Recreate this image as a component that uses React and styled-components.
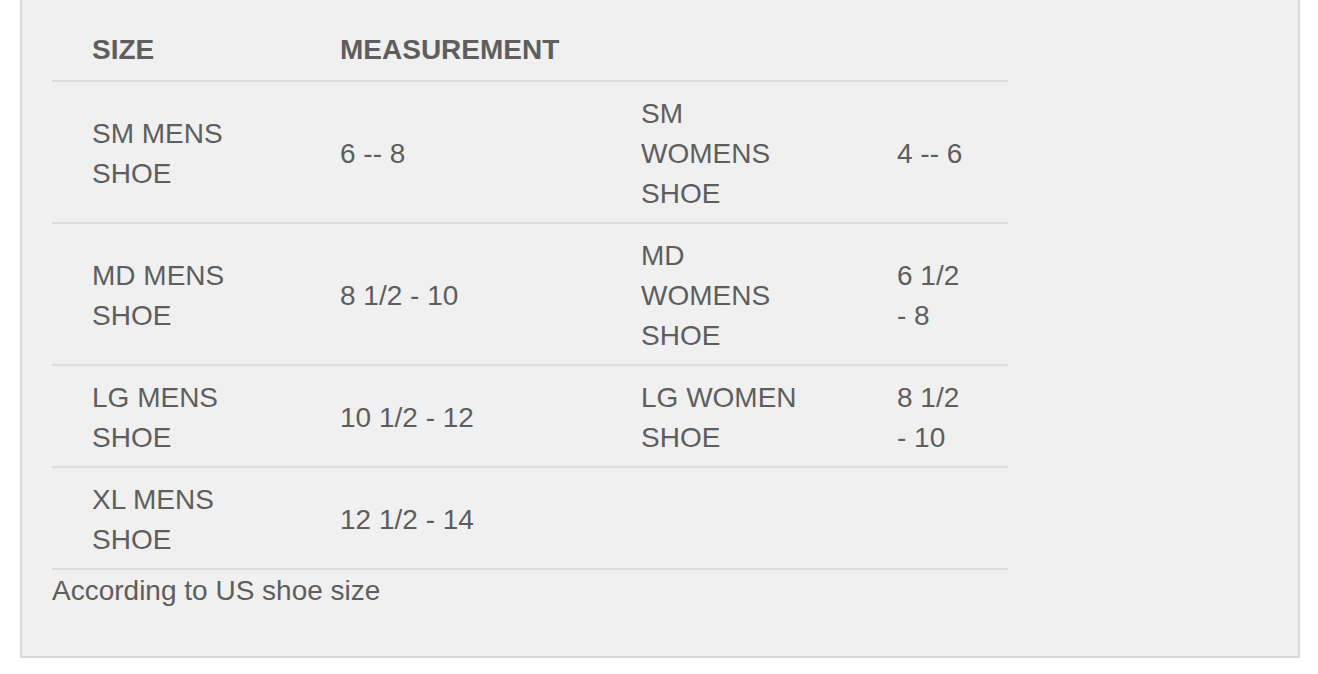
import React from 'react';
import styled, { createGlobalStyle } from 'styled-components'

const Global = createGlobalStyle `
    body {
        margin: 0;
        background: #fff;
        font-family: "Liberation Sans", Arial, Helvetica, sans-serif;
    }
`

const Panel = styled.div `
    margin: 0 18px 0 20px;
    padding: 20px 30px 45px;
    background: #f0f0f0;
    border: 2px solid #d9d9d9;
    border-top: none;
    color: #5e5e5e;
    font-size: 28px;
    line-height: 40px;
`

const Table = styled.table `
    width: 956px;
    border-collapse: collapse;
    table-layout: fixed;
`

const Col = styled.col `
    width: ${props => props.w}px;
`

const Head = styled.th `
    text-align: left;
    font-weight: 700;
    padding: 10px 16px;
    white-space: nowrap;
    &:first-child {
        padding-left: 40px;
    }
`

const Row = styled.tr `
    border-top: 2px solid #dddddd;
    &:last-child {
        border-bottom: 2px solid #dddddd;
    }
`

const Cell = styled.td `
    padding: 12px 16px 8px;
    vertical-align: middle;
    white-space: nowrap;
    &:first-child {
        padding-left: 40px;
    }
`

const Note = styled.p `
    margin: 1px 0 0;
`

const rows = [
    [['SM MENS', 'SHOE'], ['6 -- 8'], ['SM', 'WOMENS', 'SHOE'], ['4 -- 6']],
    [['MD MENS', 'SHOE'], ['8 1/2 - 10'], ['MD', 'WOMENS', 'SHOE'], ['6 1/2', '- 8']],
    [['LG MENS', 'SHOE'], ['10 1/2 - 12'], ['LG WOMEN', 'SHOE'], ['8 1/2', '- 10']],
    [['XL MENS', 'SHOE'], ['12 1/2 - 14'], [], []],
]

const Lines = ({ lines }) => lines.map((l, i) => (
    <React.Fragment key={i}>{i > 0 && <br />}{l}</React.Fragment>
))

const App = () => {
    return (
        <>
            <Global />
            <Panel>
                <Table>
                    <colgroup>
                        <Col w={272} />
                        <Col w={301} />
                        <Col w={256} />
                        <Col w={127} />
                    </colgroup>
                    <thead>
                        <tr>
                            <Head>SIZE</Head>
                            <Head>MEASUREMENT</Head>
                            <Head />
                            <Head />
                        </tr>
                    </thead>
                    <tbody>
                        {rows.map((row, i) => (
                            <Row key={i}>
                                {row.map((cell, j) => <Cell key={j}><Lines lines={cell} /></Cell>)}
                            </Row>
                        ))}
                    </tbody>
                </Table>
                <Note>According to US shoe size</Note>
            </Panel>
        </>
    )
}

export default App;
